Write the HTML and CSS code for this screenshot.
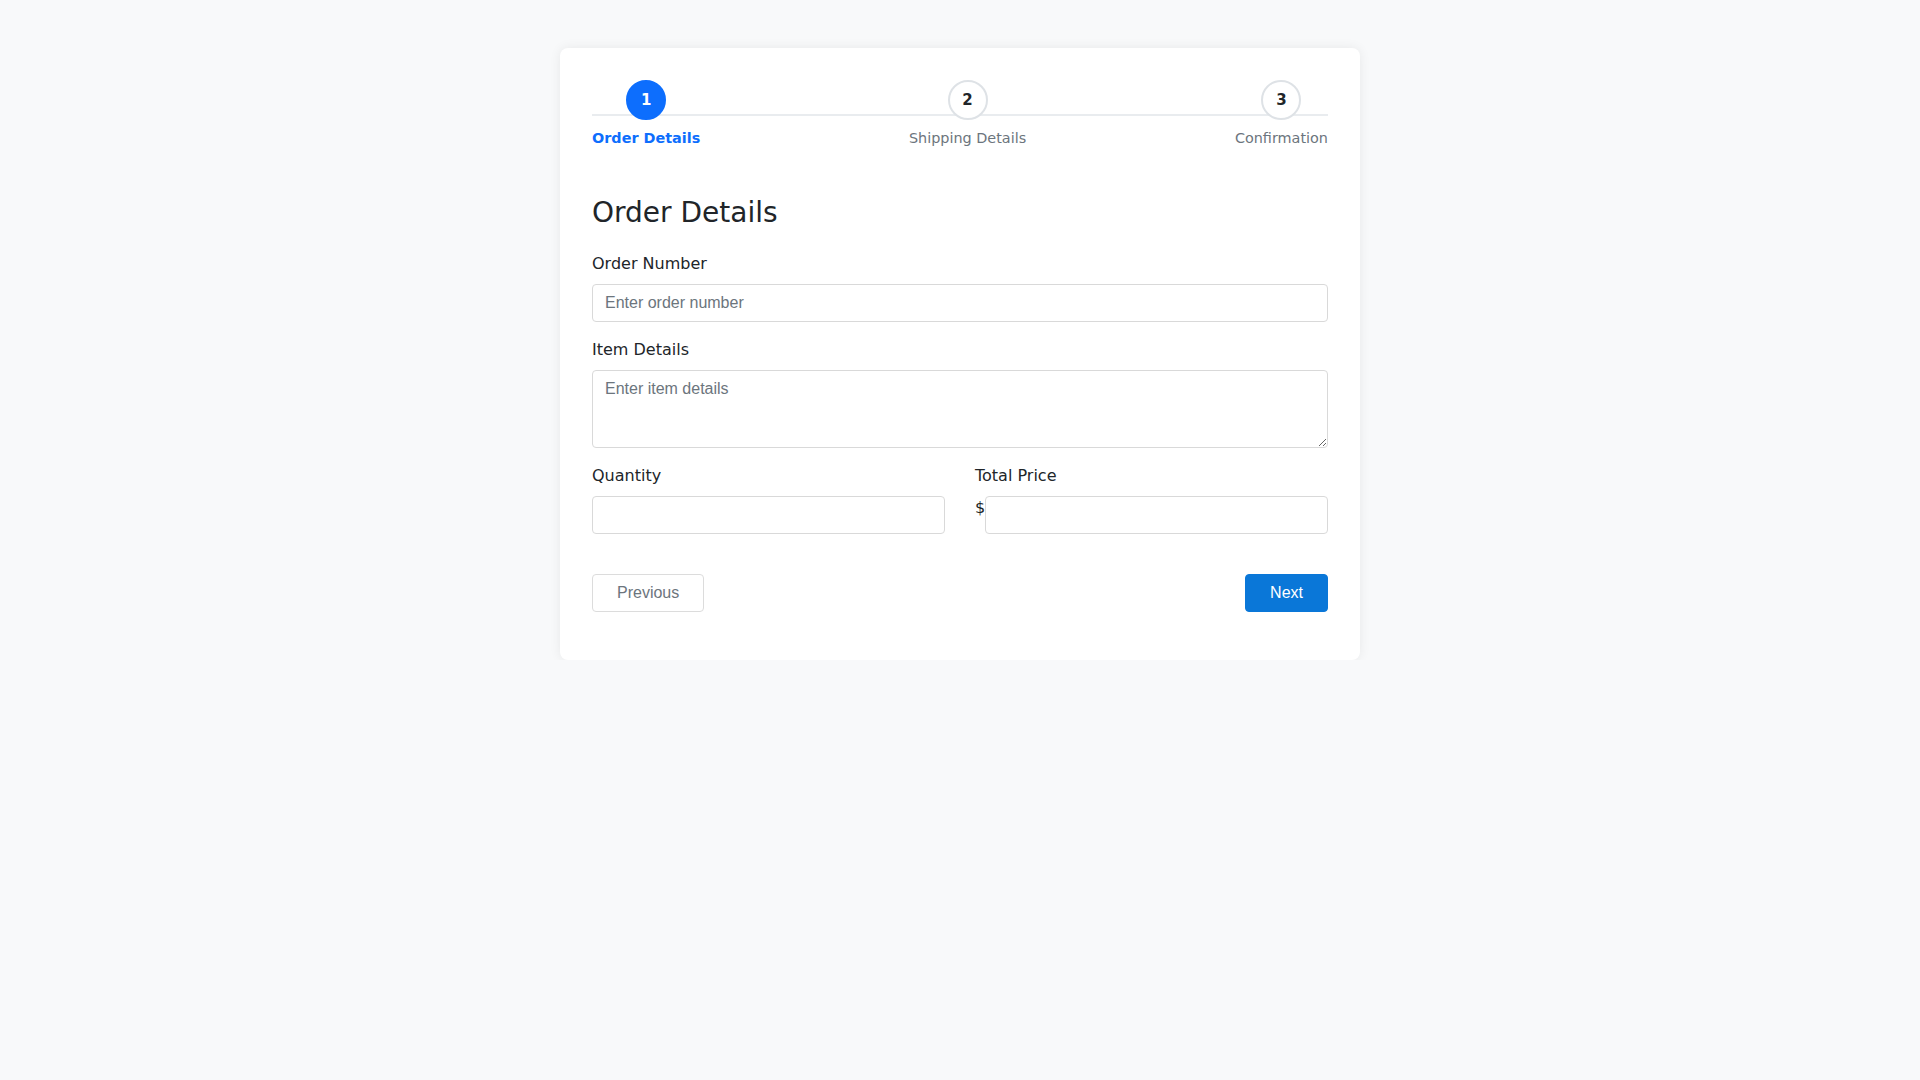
FILE: index.html
```html
<!DOCTYPE html>
<html lang="en">
<head>
<meta charset="utf-8">
<title>Order Details</title>
<link rel="stylesheet" href="styles.css">
</head>
<body>
<div class="card">
  <div class="stepper">
    <div class="step active">
      <div class="circle">1</div>
      <div class="step-label">Order Details</div>
    </div>
    <div class="step">
      <div class="circle">2</div>
      <div class="step-label">Shipping Details</div>
    </div>
    <div class="step">
      <div class="circle">3</div>
      <div class="step-label">Confirmation</div>
    </div>
  </div>

  <h3 class="title">Order Details</h3>

  <div class="group">
    <label class="label">Order Number</label>
    <input class="control" type="text" placeholder="Enter order number">
  </div>
  <div class="group">
    <label class="label">Item Details</label>
    <textarea class="control area" placeholder="Enter item details"></textarea>
  </div>
  <div class="row">
    <div class="col">
      <label class="label">Quantity</label>
      <input class="control" type="text">
    </div>
    <div class="col">
      <label class="label">Total Price</label>
      <div class="input-group">
        <span class="prefix">$</span>
        <input class="control" type="text">
      </div>
    </div>
  </div>
  <div class="actions">
    <button class="btn btn-prev">Previous</button>
    <button class="btn btn-next">Next</button>
  </div>
</div>
</body>
</html>
```
FILE: styles.css
```css
* { box-sizing: border-box; }
html, body { margin: 0; padding: 0; }
body {
  background: #f8f9fa;
  font-family: "DejaVu Sans", sans-serif;
  color: #212529;
  font-size: 16px;
  line-height: 1.5;
  padding-top: 48px;
}
.card {
  width: 800px;
  margin: 0 auto;
  background: #fff;
  border-radius: 8px;
  box-shadow: 0 0 12px rgba(0, 0, 0, 0.07);
  padding: 32px 32px 48px;
}
.stepper {
  position: relative;
  display: flex;
  justify-content: space-between;
  margin-bottom: 47px;
}
.stepper::before {
  content: "";
  position: absolute;
  left: 0;
  right: 0;
  top: 34px;
  height: 2px;
  background: #e9ecef;
}
.step {
  position: relative;
  display: flex;
  flex-direction: column;
  align-items: center;
}
.circle {
  width: 40px;
  height: 40px;
  border-radius: 50%;
  border: 2px solid #dee2e6;
  background: #fff;
  display: flex;
  align-items: center;
  justify-content: center;
  font-weight: bold;
  font-size: 15px;
  color: #212529;
  margin-bottom: 8px;
}
.step-label {
  font-size: 14.4px;
  line-height: 21px;
  color: #6c757d;
}
.step.active .circle {
  background: #0d6efd;
  border-color: #0d6efd;
  color: #fff;
}
.step.active .step-label {
  color: #0d6efd;
  font-weight: bold;
}
.title {
  font-size: 28px;
  font-weight: normal;
  line-height: 1.2;
  margin: 0 0 22px;
  color: #212529;
}
.group { margin-bottom: 16px; }
.label {
  display: block;
  margin-bottom: 8px;
  line-height: 24px;
}
.control {
  display: block;
  width: 100%;
  height: 38px;
  padding: 6px 12px;
  font-family: "Liberation Sans", Arial, sans-serif;
  font-size: 16px;
  color: #495057;
  background: #fff;
  border: 1px solid #d9d9d9;
  border-radius: 4px;
  outline: none;
}
.control::placeholder { color: #6c757d; }
.area {
  height: 78px;
  resize: vertical;
  padding-top: 6px;
  line-height: 1.5;
}
.row {
  display: flex;
  gap: 30px;
  margin-bottom: 40px;
}
.col { flex: 1; }
.input-group {
  display: flex;
}
.prefix {
  line-height: 24px;
  font-size: 16px;
}
.input-group .control { flex: 1; }
.actions {
  display: flex;
  justify-content: space-between;
}
.btn {
  height: 38px;
  padding: 0 24px;
  font-family: "Liberation Sans", Arial, sans-serif;
  font-size: 16px;
  border-radius: 4px;
  border: 1px solid transparent;
  cursor: pointer;
}
.btn-prev {
  background: #fff;
  border-color: #dcdcdc;
  color: #6c757d;
}
.btn-next {
  background: #0a77d8;
  border-color: #0a77d8;
  color: #fff;
}
```
